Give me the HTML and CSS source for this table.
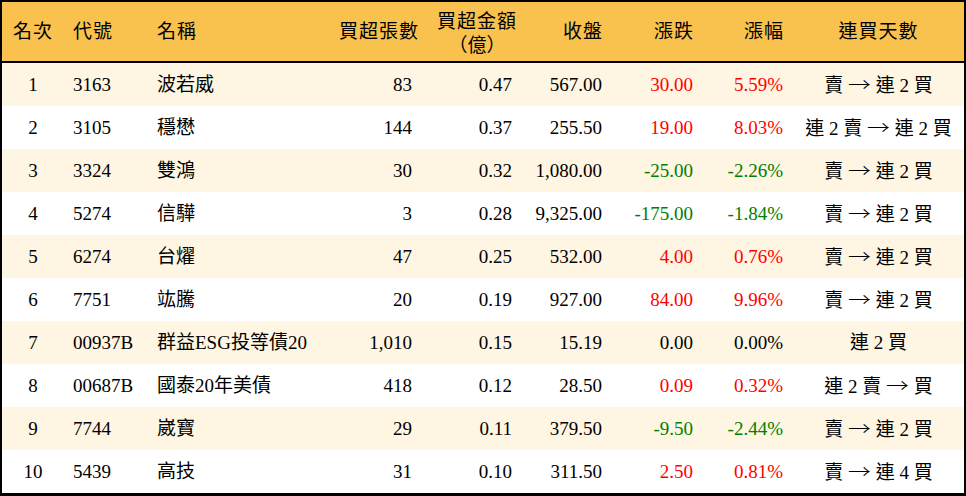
FILE: index.html
```html
<!DOCTYPE html>
<html lang="zh-Hant">
<head>
<meta charset="utf-8">
<title>買超排行</title>
<link rel="stylesheet" href="styles.css">
</head>
<body>
<table class="rank">
  <colgroup>
    <col class="c-rank"><col class="c-code"><col class="c-name"><col class="c-vol"><col class="c-amt"><col class="c-close"><col class="c-chg"><col class="c-pct"><col class="c-days">
  </colgroup>
  <thead>
    <tr>
      <th class="ctr">名次</th>
      <th class="lft">代號</th>
      <th class="lft">名稱</th>
      <th class="rgt">買超張數</th>
      <th class="rgt amt"><span class="two"><span>買超金額</span><span class="paren">（億）</span></span></th>
      <th class="rgt">收盤</th>
      <th class="rgt">漲跌</th>
      <th class="rgt">漲幅</th>
      <th class="ctr">連買天數</th>
    </tr>
  </thead>
  <tbody>
    <tr><td class="ctr">1</td><td>3163</td><td>波若威</td><td class="rgt">83</td><td class="rgt">0.47</td><td class="rgt">567.00</td><td class="rgt up">30.00</td><td class="rgt up">5.59%</td><td class="ctr">賣 <span class="arr">→</span> 連 2 買</td></tr>
    <tr><td class="ctr">2</td><td>3105</td><td>穩懋</td><td class="rgt">144</td><td class="rgt">0.37</td><td class="rgt">255.50</td><td class="rgt up">19.00</td><td class="rgt up">8.03%</td><td class="ctr">連 2 賣 <span class="arr">→</span> 連 2 買</td></tr>
    <tr><td class="ctr">3</td><td>3324</td><td>雙鴻</td><td class="rgt">30</td><td class="rgt">0.32</td><td class="rgt">1,080.00</td><td class="rgt dn">-25.00</td><td class="rgt dn">-2.26%</td><td class="ctr">賣 <span class="arr">→</span> 連 2 買</td></tr>
    <tr><td class="ctr">4</td><td>5274</td><td>信驊</td><td class="rgt">3</td><td class="rgt">0.28</td><td class="rgt">9,325.00</td><td class="rgt dn">-175.00</td><td class="rgt dn">-1.84%</td><td class="ctr">賣 <span class="arr">→</span> 連 2 買</td></tr>
    <tr><td class="ctr">5</td><td>6274</td><td>台燿</td><td class="rgt">47</td><td class="rgt">0.25</td><td class="rgt">532.00</td><td class="rgt up">4.00</td><td class="rgt up">0.76%</td><td class="ctr">賣 <span class="arr">→</span> 連 2 買</td></tr>
    <tr><td class="ctr">6</td><td>7751</td><td>竑騰</td><td class="rgt">20</td><td class="rgt">0.19</td><td class="rgt">927.00</td><td class="rgt up">84.00</td><td class="rgt up">9.96%</td><td class="ctr">賣 <span class="arr">→</span> 連 2 買</td></tr>
    <tr><td class="ctr">7</td><td>00937B</td><td>群益ESG投等債20</td><td class="rgt">1,010</td><td class="rgt">0.15</td><td class="rgt">15.19</td><td class="rgt">0.00</td><td class="rgt">0.00%</td><td class="ctr">連 2 買</td></tr>
    <tr><td class="ctr">8</td><td>00687B</td><td>國泰20年美債</td><td class="rgt">418</td><td class="rgt">0.12</td><td class="rgt">28.50</td><td class="rgt up">0.09</td><td class="rgt up">0.32%</td><td class="ctr">連 2 賣 <span class="arr">→</span> 買</td></tr>
    <tr><td class="ctr">9</td><td>7744</td><td>崴寶</td><td class="rgt">29</td><td class="rgt">0.11</td><td class="rgt">379.50</td><td class="rgt dn">-9.50</td><td class="rgt dn">-2.44%</td><td class="ctr">賣 <span class="arr">→</span> 連 2 買</td></tr>
    <tr><td class="ctr">10</td><td>5439</td><td>高技</td><td class="rgt">31</td><td class="rgt">0.10</td><td class="rgt">311.50</td><td class="rgt up">2.50</td><td class="rgt up">0.81%</td><td class="ctr">賣 <span class="arr">→</span> 連 4 買</td></tr>
  </tbody>
</table>
</body>
</html>
```
FILE: styles.css
```css
html, body {
  margin: 0;
  padding: 0;
  background: #ffffff;
}
body {
  width: 966px;
  height: 496px;
  overflow: hidden;
}
.rank {
  width: 966px;
  border-collapse: separate;
  border-spacing: 0;
  table-layout: fixed;
  border: 2px solid #000;
  border-bottom-width: 3px;
  font-family: "Liberation Serif", "Noto Sans CJK TC", serif;
  font-size: 19px;
  color: #000;
}
.c-rank { width: 62px; }
.c-code { width: 84px; }
.c-name { width: 182px; }
.c-vol { width: 92px; }
.c-amt { width: 100px; }
.c-close { width: 90px; }
.c-chg { width: 91px; }
.c-pct { width: 90px; }
.c-days { width: 171px; }

th, td {
  padding: 0 10px 0 9px;
  white-space: nowrap;
  font-weight: normal;
}
thead th {
  height: 59px;
  background: #f9c24f;
  border-bottom: 2px solid #000;
  letter-spacing: 1px;
  line-height: 19px;
}
tbody td {
  height: 43px;
  line-height: 20px;
  text-align: left;
}
tbody tr:nth-child(odd) td {
  background: #fef5e2;
}
tbody tr:nth-child(even) td {
  background: #ffffff;
}
.lft { text-align: left; }
.rgt { text-align: right; }
.ctr { text-align: center; }
th.ctr, td.ctr { padding: 0; }
th.rgt { letter-spacing: 1px; padding-right: 9px; }
th.amt { padding-right: 5px; }
.two {
  display: inline-flex;
  flex-direction: column;
  align-items: center;
  gap: 1px;
  padding-top: 2px;
}
.two > span {
  display: block;
  line-height: 21px;
  height: 21px;
}
.paren {
  font-family: "Noto Sans CJK TC", sans-serif;
  font-size: 19px;
  letter-spacing: 0;
}
.arr {
  display: inline-block;
  font-family: "Noto Sans CJK TC", sans-serif;
  font-weight: 300;
  transform: scaleX(1.2);
  margin: 0 2px;
}
.up { color: #ff0000; }
.dn { color: #008000; }
```
